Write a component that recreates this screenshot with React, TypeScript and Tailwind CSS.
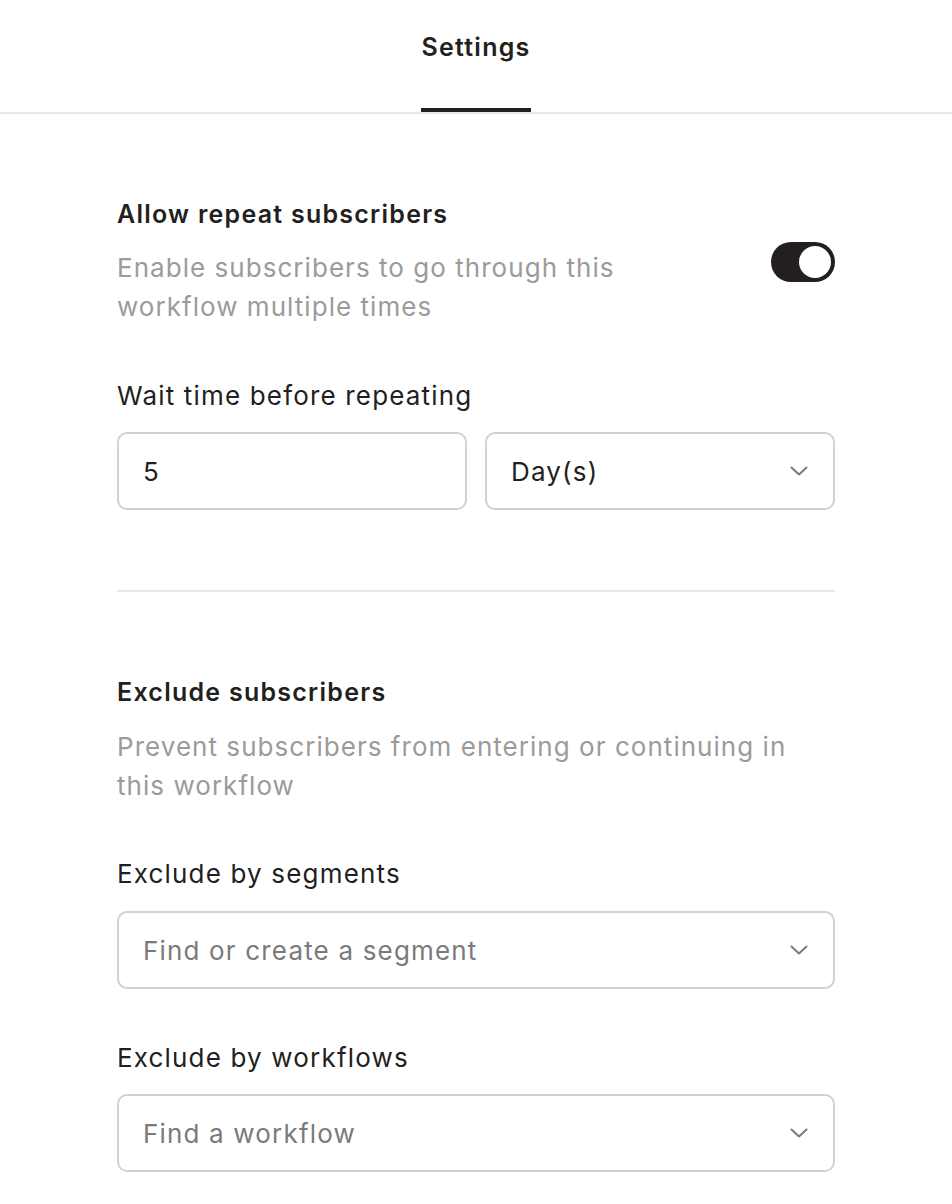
const font = { fontFamily: 'Inter, "Liberation Sans", sans-serif' };

function Chevron() {
    return (
        <svg width="18" height="10" viewBox="0 0 18 10" fill="none" className="shrink-0">
            <path d="M1.5 1.5L9 8.5L16.5 1.5" stroke="#7a7a7a" strokeWidth="2" strokeLinecap="round" strokeLinejoin="round" />
        </svg>
    );
}

function SelectBox({ value, placeholder }: { value?: string; placeholder?: string }) {
    return (
        <div className="flex h-[78px] w-full items-center justify-between rounded-[10px] border-2 border-[#d2d2d2] bg-white pl-[24px] pr-[25px]">
            {value ? (
                <span className="text-[26px] tracking-[0.045em] text-[#231f20]">{value}</span>
            ) : (
                <span className="text-[26px] tracking-[0.045em] text-[#7a7a7a]">{placeholder}</span>
            )}
            <Chevron />
        </div>
    );
}

export default function App() {
    return (
        <div className="min-h-screen bg-white text-[#231f20]" style={font}>
            {/* Tab Header */}
            <div className="flex justify-center border-b-2 border-[#e8e8e8]">
                <div className="flex flex-col items-center">
                    <span className="pt-[31px] text-[25px] font-semibold leading-8 tracking-[0.05em]">Settings</span>
                    <div className="mt-[45px] h-[4px] w-full bg-[#231f20]" />
                </div>
            </div>

            <div className="px-[117px] pt-[84px]">
                {/* Repeat subscribers */}
                <div className="flex items-center justify-between">
                    <div className="w-[560px]">
                        <h2 className="text-[25px] font-semibold leading-8 tracking-[0.05em]">Allow repeat subscribers</h2>
                        <p className="mt-[18px] text-[26px] leading-[39px] tracking-[0.04em] text-[#9b9b9b]">
                            Enable subscribers to go through this workflow multiple times
                        </p>
                    </div>
                    <div className="flex h-[40px] w-[64px] items-center justify-end rounded-full bg-[#231f20] px-[4px]">
                        <div className="h-[32px] w-[32px] rounded-full bg-white" />
                    </div>
                </div>

                <label className="mt-[54px] block text-[26px] leading-8 tracking-[0.045em]">Wait time before repeating</label>
                <div className="mt-[20px] grid grid-cols-2 gap-[18px]">
                    <div className="flex h-[78px] items-center rounded-[10px] border-2 border-[#d2d2d2] pl-[24px] text-[26px]">
                        5
                    </div>
                    <SelectBox value="Day(s)" />
                </div>

                <div className="mt-[80px] h-[2px] bg-[#e8e8e8]" />

                {/* Exclude subscribers */}
                <h2 className="mt-[84px] text-[25px] font-semibold leading-8 tracking-[0.05em]">Exclude subscribers</h2>
                <p className="mt-[19px] text-[26px] leading-[39px] tracking-[0.04em] text-[#9b9b9b]">
                    Prevent subscribers from entering or continuing in this workflow
                </p>

                <label className="mt-[53px] block text-[26px] leading-8 tracking-[0.045em]">Exclude by segments</label>
                <div className="mt-[21px]">
                    <SelectBox placeholder="Find or create a segment" />
                </div>

                <label className="mt-[53px] block text-[26px] leading-8 tracking-[0.045em]">Exclude by workflows</label>
                <div className="mt-[20px]">
                    <SelectBox placeholder="Find a workflow" />
                </div>
            </div>
        </div>
    );
}
